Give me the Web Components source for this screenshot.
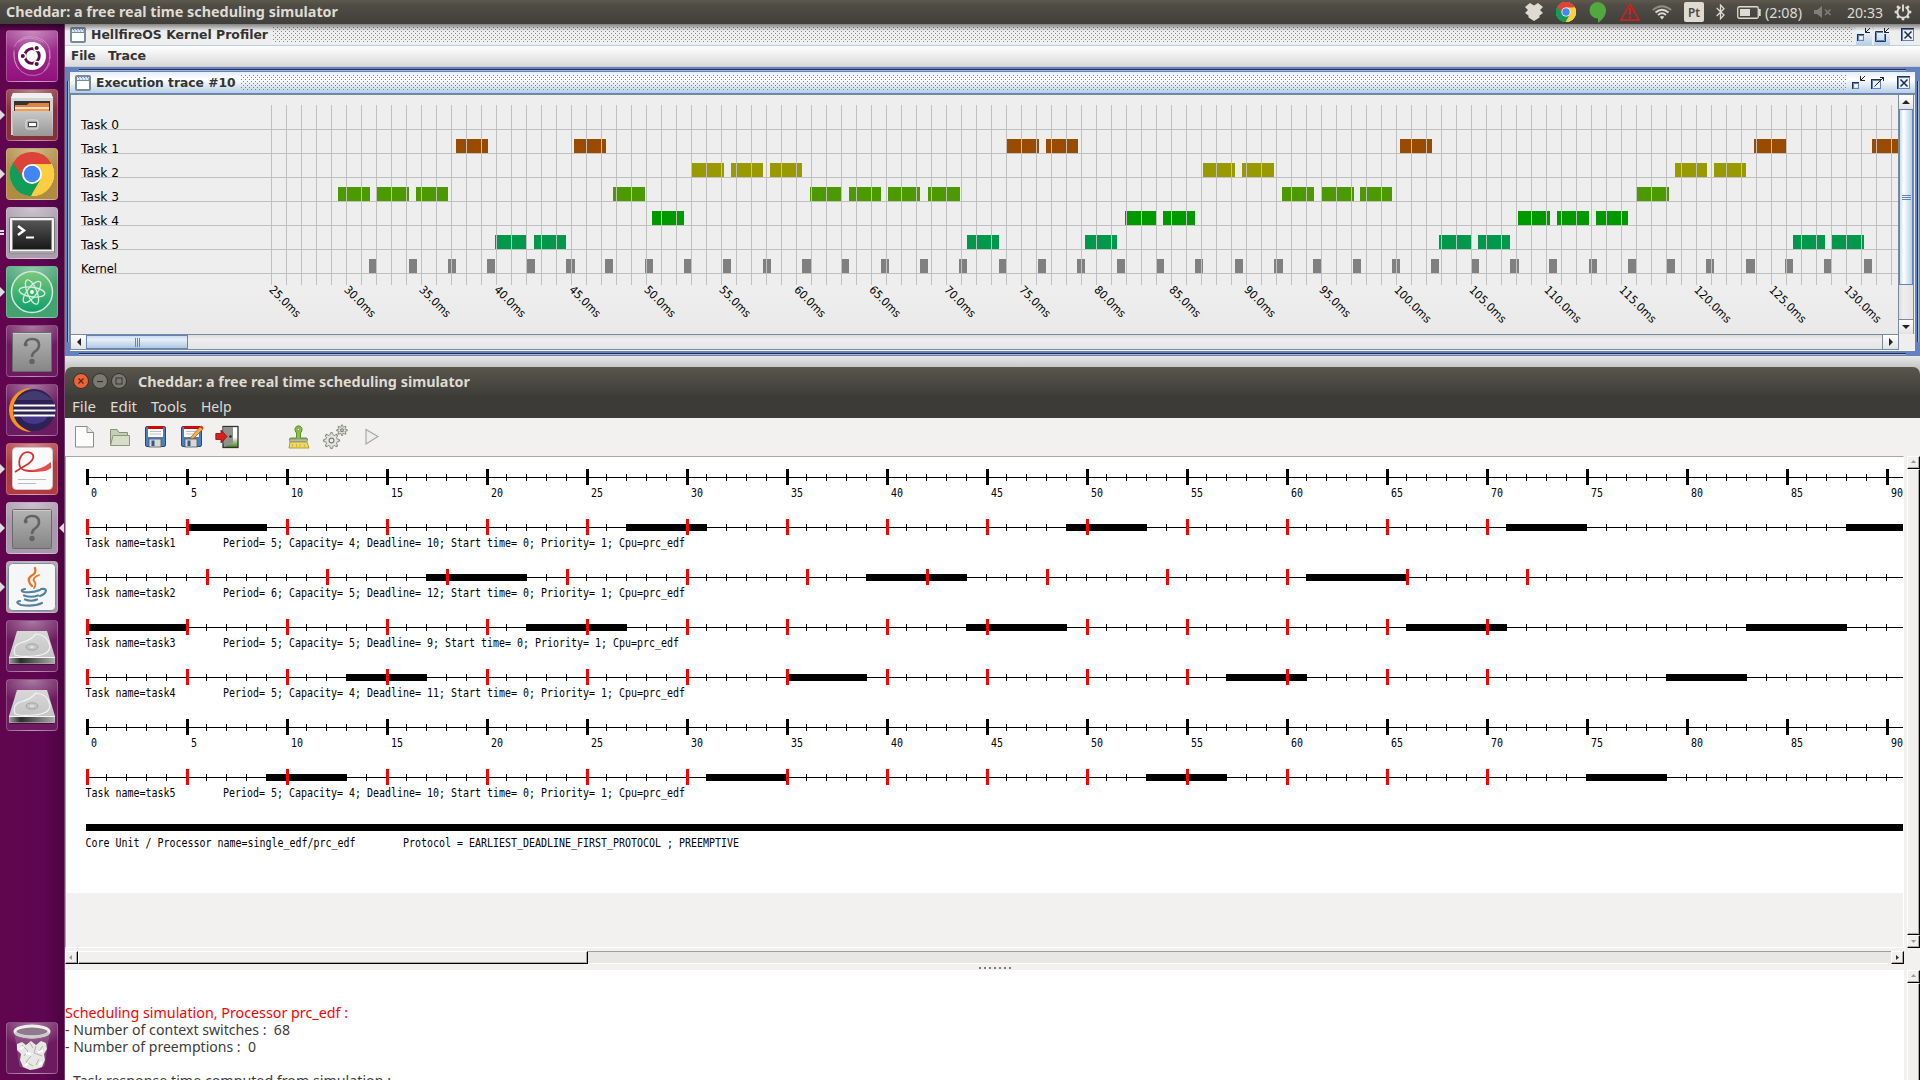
<!DOCTYPE html>
<html lang="en">
<head>
<meta charset="utf-8">
<title>Cheddar: a free real time scheduling simulator</title>
<style>
html,body{margin:0;padding:0;width:1920px;height:1080px;overflow:hidden;background:#5c0550}
</style>
</head>
<body>
<ubuntu-desktop></ubuntu-desktop>
<script>
const define = (name, render) => customElements.define(name, class extends HTMLElement {
  connectedCallback() {
    if (this.shadowRoot) return;
    this.attachShadow({mode: 'open'}).innerHTML = render(this);
  }
});
const range = (a, b, s = 1) => { const r = []; for (let i = a; i <= b; i += s) r.push(i); return r; };

/* One line of text condensed or stretched to an exact advance width. */
define('fit-text', el => {
  const g = (n, d) => el.getAttribute(n) || d;
  const w = g('w', 100), h = g('h', 20), b = g('base', 15);
  return `<style>:host{display:block;flex:none;width:${w}px;height:${h}px}svg{display:block;overflow:visible}
  text{font-family:${g('font', '"Noto Sans","Open Sans",sans-serif')};font-size:${g('size', 15)}px;font-weight:${g('weight', 400)};white-space:pre}</style>
  <svg width="${w}" height="${h}"><text x="0" y="${b}" fill="${g('color', '#dfdbd2')}" textLength="${w}" lengthAdjust="spacingAndGlyphs">${el.getAttribute('text')}</text></svg>`;
});

const chrome = `<circle cx="24" cy="24" r="22" fill="#fff"/>
 <path d="M24 24L4.9 13A22 22 0 0 1 43.1 13Z" fill="#db4437"/><path d="M24 24L43.1 13A22 22 0 0 1 24 46Z" fill="#ffcd40"/><path d="M24 24L24 46A22 22 0 0 1 4.9 13Z" fill="#0f9d58"/>
 <path d="M24 14H43.6A22 22 0 0 0 4.9 13L15.3 29Z" fill="#db4437"/><path d="M24 14H43.6A22 22 0 0 1 22.8 46L32.7 29Z" fill="#ffcd40"/><path d="M15.3 29L4.9 13A22 22 0 0 0 22.8 46L32.7 29L24 34Z" fill="#0f9d58"/>
 <circle cx="24" cy="24" r="10" fill="#fff"/><circle cx="24" cy="24" r="8.2" fill="#4285f4"/>`;
const question = `<defs><linearGradient id="q" x2="0" y2="1"><stop stop-color="#b4b4b4"/><stop offset="1" stop-color="#868686"/></linearGradient></defs>
 <rect x="6.5" y="7.500" width="39" height="39" rx="1" fill="url(#q)" stroke="#6a6a6a"/><path d="M7 8.500H45" stroke="#ccc"/>
 <path d="M19 19.500Q20 14 26 14Q33 14 33 20Q33 24 29 26.500Q26 28.500 26 32" fill="none" stroke="#636363" stroke-width="2.600"/><circle cx="19.700" cy="19.500" r="2" fill="#636363"/><circle cx="26" cy="36.500" r="2.700" fill="#636363"/>`;
const disk = `<defs><linearGradient id="d" x2="0" y2="1"><stop stop-color="#d8d8d8"/><stop offset="1" stop-color="#c0c0c0"/></linearGradient><linearGradient id="e"><stop stop-color="#999"/><stop offset=".25" stop-color="#2c2c2c"/><stop offset="1" stop-color="#aaa"/></linearGradient></defs>
 <path d="M11 11H41L49 37V43Q49 44 48 44H4Q3 44 3 43V37Z" fill="url(#d)"/><path d="M3.500 38H48.500V43.500H3.500Z" fill="url(#e)"/><path d="M3 37.500H49" stroke="#f5f5f5"/>
 <path d="M9 35Q6 26 14 23Q24 21 30 14Q42 15 44 26Q44 35 28 36Q14 37 9 35" fill="none" stroke="#f3f3f3" stroke-width="1.200"/><ellipse cx="26" cy="27" rx="6" ry="3.200" fill="#c3c3c3" stroke="#a5a5a5"/><ellipse cx="26" cy="27" rx="2.500" ry="1.300" fill="#ddd"/>
 <path d="M4 44.500H48" stroke="#2c0326" opacity=".6"/>`;
const gearPath = (cx, cy, r, n, t, w) => range(0, n - 1).map(i => { const a = i * 2 * Math.PI / n; return `<path d="M${(cx + Math.cos(a) * r).toFixed(1)} ${(cy + Math.sin(a) * r).toFixed(1)}L${(cx + Math.cos(a) * (r + t)).toFixed(1)} ${(cy + Math.sin(a) * (r + t)).toFixed(1)}" stroke-width="${w}"/>`; }).join('');
const gear = (cx, cy, r, n, w) => `<g stroke="#888a85" stroke-linecap="round">${gearPath(cx, cy, r - .5, n, 1.8, w + 1.3)}</g><circle cx="${cx}" cy="${cy}" r="${r + .3}" fill="#e4e4e1" stroke="#888a85"/><g stroke="#e4e4e1" stroke-linecap="round">${gearPath(cx, cy, r - 1.2, n, 1.8, w)}</g><circle cx="${cx}" cy="${cy}" r="${r * .42}" fill="#f2f1f0" stroke="#7d7f7a" stroke-width="1.200"/>`;
const floppy = `<rect x="1.500" y="1.500" width="20" height="20" rx="1.500" fill="#4d7fc0" stroke="#204a87"/><rect x="4" y="1" width="15" height="11" fill="#fff"/><rect x="4" y="1" width="15" height="3" fill="#d00a0a"/><path d="M6 6.500H17M6 9H17" stroke="#bbb"/><rect x="5" y="14" width="12" height="8" fill="#d6d9d5" stroke="#55585a" stroke-width=".8"/><rect x="7.500" y="15.500" width="3" height="5.500" fill="#3a5687"/>`;
/* name: [width, height, viewBox, markup] */
const ICONS = {
 ubuntu: [52,52,'0 0 52 52',`<path d="M8 17Q14 4 30 7Q46 11 44 29M44 33Q38 48 22 45Q7 40 8 22M12 12Q23 4 37 12M13 39Q7 32 8 20M43 20Q46 32 38 41" fill="none" stroke="#e2a3d2" stroke-width="1" opacity=".6"/><circle cx="26" cy="26" r="14" fill="#fff"/><circle cx="26" cy="26" r="7.300" fill="none" stroke="#5b0d4c" stroke-width="2.800"/><g stroke="#fff" stroke-width="1.300" fill="#5b0d4c"><circle cx="16.800" cy="26" r="2.700"/><circle cx="30.700" cy="18" r="2.700"/><circle cx="30.700" cy="34" r="2.700"/></g>`],
 files: [52,52,'0 0 52 52',`<defs><linearGradient id="a" x2="0" y2="1"><stop stop-color="#c9c9c9"/><stop offset="1" stop-color="#989898"/></linearGradient></defs><path d="M7 4H45L47 9V46H5V9Z" fill="#d4d4d4"/><path d="M7 4H45L47 9H5Z" fill="#f0f0f0"/><rect x="8" y="12" width="36" height="11" fill="#333"/><path d="M9 16H21L23 14H43V24H9Z" fill="#e08243"/><path d="M9 18H43V20H9Z" fill="#fae0c0"/><rect x="9" y="20" width="34" height="3" fill="#f39b48"/><path d="M6 22H46L47 47H7Z" fill="url(#a)"/><rect x="20" y="31" width="12" height="9" rx="2" fill="#aaa" stroke="#e1e1e1"/><rect x="22.500" y="33.500" width="8" height="4" fill="#fff" stroke="#4a4a4a"/>`],
 chrome: [52,52,'-2 -2 52 52',chrome],
 chromesmall: [20,20,'2 2 44 44',chrome],
 terminal: [52,52,'0 0 52 52',`<defs><linearGradient id="t" x2="0" y2="1"><stop stop-color="#555"/><stop offset="1" stop-color="#181818"/></linearGradient></defs><rect x="3.500" y="10.500" width="45" height="36" rx="1.500" fill="#f4f4f4" stroke="#777"/><path d="M4 44H48V46.500H4Z" fill="#aaa"/><rect x="6.500" y="13.500" width="39" height="29" fill="url(#t)" stroke="#888"/><path d="M12 19L18 23.500L12 28" fill="none" stroke="#fff" stroke-width="2.500"/><path d="M20 30.500H28" stroke="#fff" stroke-width="2"/>`],
 atom: [52,52,'0 0 52 52',`<defs><linearGradient id="m" x2="0" y2="1"><stop stop-color="#7cc87a"/><stop offset="1" stop-color="#0aa06c"/></linearGradient></defs><circle cx="26" cy="26" r="20.500" fill="url(#m)" stroke="#d5e7dd" stroke-width="1.500"/><g fill="none" stroke="#d2efdf" stroke-width="1.300"><ellipse cx="26" cy="26" rx="13" ry="4.800" transform="rotate(8 26 26)"/><ellipse cx="26" cy="26" rx="13" ry="4.800" transform="rotate(68 26 26)"/><ellipse cx="26" cy="26" rx="13" ry="4.800" transform="rotate(128 26 26)"/></g><circle cx="26" cy="26" r="1.900" fill="#e8fff2"/>`],
 question: [52,52,'0 0 52 52',question],
 eclipse: [52,52,'0 0 52 52',`<path d="M25 4A22 22 0 0 0 25 48Q9 40 9 26Q9 12 25 4" fill="#f7941e"/><circle cx="28" cy="26" r="21" fill="#2c2255"/><path d="M10 16Q28 -2 46 16Z" fill="#534b82" opacity=".6"/><path d="M14 32H42Q38 40 28 40Q18 40 14 32" fill="#473788"/><path d="M8 21.500H49M7.500 26.500H49.500M8 31.500H49" stroke="#fff" stroke-width="2.200"/>`],
 evince: [52,52,'0 0 52 52',`<rect x="6.500" y="4.500" width="40" height="42" rx="4" fill="#fafafa" stroke="#ccc"/><path d="M9 29Q15 25 22 21Q31 14 25 10Q18 7 14 15Q11 26 20 27.500Q32 30 45 23" fill="none" stroke="#d53434" stroke-width="1.800"/><path d="M24 27Q35 27 45 19V25Q38 31 24 27" fill="#e0504c"/><path d="M12 36.500H40M12 40.500H30" stroke="#bbb"/>`],
 java: [52,52,'0 0 52 52',`<rect x="2.500" y="2.500" width="47" height="47" rx="4" fill="#f6f6f6" stroke="#7393a9"/><g fill="none" stroke="#ea7425" stroke-linecap="round" stroke-width="2.300"><path d="M29 7Q31 12 25 15Q20 19 26 25"/><path d="M33 14Q26 17 28 20Q31 23 28 27" stroke-width="1.800"/></g><g fill="none" stroke="#5382a1" stroke-width="2.200" stroke-linecap="round"><path d="M19 28Q13 29 18 31Q27 32 34 29M18 34.500Q25 37 32 34.500M19 38.500Q25 41 31 38.500M35 28Q42 27 39 32Q37 34 34 35M14 40Q8 41 15 44Q28 46 36 42"/></g>`],
 disk: [52,52,'0 0 52 52',disk],
 trash: [52,52,'0 0 52 52',`<path d="M9 11L14 44Q26 50 38 44L43 11Z" fill="#b9a3b8" opacity=".25" stroke="#c9b5c7"/><ellipse cx="26" cy="9.500" rx="17" ry="5.500" fill="#8e7a8c" stroke="#efefec" stroke-width="3"/><path d="M9 11Q26 20 43 11" fill="none" stroke="#c9c9c4" stroke-width="2"/><path d="M11 22L16 20L20 23L25 19L30 23L35 19L40 21L41 27L38 32L39 38L36 45L30 47L24 48L17 45L14 38L15 32L11 28Z" fill="#e7e7e4"/><path d="M16 23L22 29L18 34M30 24L28 31L36 34M25 34L20 40L27 44M33 37L30 43M24 21L27 26M37 24L33 29" fill="none" stroke="#b5b5b0" stroke-width="1"/><path d="M14 27L18 25M20 31L25 32M32 30L37 29M19 44L22 41M33 43L36 40" stroke="#fff" stroke-width="1.800"/>`],
 dropbox: [18,18,'0 0 18 18',`<path d="M5 0L9 2.500L13 0L18 4L15 7L18 10L14.500 12.500V14.500L9 18L3.500 14.500V12.500L0 10L3 7L0 4Z" fill="#dfdbd2"/>`],
 hangouts: [17,21,'0 0 17 21',`<path d="M8.500 0A8.300 8.300 0 0 1 17 8.500Q17 15 9 21V16.500A8.200 8.200 0 0 1 8.500 0" fill="#51a83f"/>`],
 warning: [20,18,'0 0 20 18',`<path d="M10 1.200L19 17H1Z" fill="none" stroke="#e21b1b" stroke-width="1.500"/><path d="M10 5V12M10 13.500V15.500" stroke="#e21b1b" stroke-width="2"/>`],
 wifi: [20,15,'0 0 20 15',`<g fill="none" stroke="#dfdbd2" stroke-width="1.800"><path d="M.8 5Q10 -2.500 19.200 5" opacity=".45"/><path d="M3.500 7.500Q10 2 16.500 7.500"/><path d="M6 10Q10 6.500 14 10"/></g><path d="M7.700 11.800Q10 10 12.300 11.800L10 14.500Z" fill="#dfdbd2"/>`],
 bluetooth: [9,16,'0 0 9 16',`<path d="M.7 4L8 11L4.500 14.700V1L8 4.700L.7 12" fill="none" stroke="#dfdbd2" stroke-width="1.300"/>`],
 battery: [24,13,'0 0 24 13',`<rect x=".75" y=".75" width="20.500" height="11.500" rx="1.500" fill="none" stroke="#dfdbd2" stroke-width="1.300"/><rect x="3" y="3" width="10" height="7" fill="#dfdbd2"/><path d="M22.800 3V10" stroke="#dfdbd2" stroke-width="1.800"/>`],
 mute: [18,12,'0 0 18 12',`<path d="M0 4H3L8 0V12L3 8H0Z" fill="#807e77"/><path d="M11 3.500L16.500 9M16.500 3.500L11 9" stroke="#807e77" stroke-width="1.500"/>`],
 session: [18,18,'0 0 18 18',`<g stroke="#dfdbd2">${range(0,7).filter(i=>i!==6).map(i=>{const a=i*Math.PI/4;return `<path d="M${9+Math.cos(a)*5.5} ${9+Math.sin(a)*5.5}L${9+Math.cos(a)*8.3} ${9+Math.sin(a)*8.3}" stroke-width="2.600"/>`}).join('')}<path d="M6.500 4.200A5.600 5.600 0 1 0 11.500 4.200M9 1.500V8.500" fill="none" stroke-width="1.900"/></g>`],
 winicon: [16,16,'0 0 16 16',`<rect x="1" y="1" width="14" height="14" rx="1" fill="#fff" stroke="#7a8a99" stroke-width="2"/><rect x="2" y="2" width="12" height="3" fill="#dfe8f2"/><path d="M2 5.500H14" stroke="#7a8a99"/><path d="M3 2.500H14M4 4H14" stroke="#6382bf" stroke-dasharray="1 2"/>`],
 jmin: [16,16,'0 0 16 16',`<g fill="none"><rect x="1.500" y="7.500" width="6" height="6" stroke="#26304a"/><rect x="2.500" y="8.500" width="5" height="5" stroke="#6382bf"/></g><rect x="4" y="10" width="2" height="2" fill="#fff"/><path d="M9.500 1V5.500H14M9.500 5.500L14 1" fill="none" stroke="#222"/>`],
 jres: [16,16,'0 0 16 16',`<path d="M9 4.500H1.500V14.500H11.500V7" fill="none" stroke="#26304a"/><path d="M9 5.500H2.500V13.500H10.500V7" fill="none" stroke="#6382bf"/><path d="M10.500 1V5.500H15M10.500 5.500L15 1" fill="none" stroke="#222"/>`],
 jmax: [16,16,'0 0 16 16',`<rect x="1.500" y="4.500" width="9" height="9" fill="#eef4fa" stroke="#26304a"/><rect x="2.500" y="5.500" width="8" height="8" fill="none" stroke="#6382bf"/><path d="M4.500 11.500L13.500 2.500M10 2.500H13.500V6" fill="none" stroke="#222"/>`],
 jclose: [16,16,'0 0 16 16',`<rect x="1.500" y="1.500" width="12" height="12" fill="#e8f0f8" stroke="#26304a"/><rect x="2.500" y="2.500" width="11" height="11" fill="none" stroke="#6382bf"/><path d="M4.500 4.500L11.500 11.500M11.500 4.500L4.500 11.500" stroke="#222b42" stroke-width="1.500"/>`],
 new: [22,24,'0 0 22 24',`<path d="M2.500 1.500H14L20.500 7.500V22H2.500Z" fill="#fcfcfb" stroke="#8b8d88"/><path d="M14 1.500V7.500H20.500" fill="#e6e6e3" stroke="#8b8d88"/>`],
 open: [22,24,'0 0 22 24',`<path d="M1.500 20V4.500H8L10 7.500H18.500V11" fill="#c5ceb6" stroke="#888f7b"/><path d="M1.500 20.500L4 10.500H20.500V20.500Z" fill="#d6ddc8" stroke="#8d957f"/>`],
 save: [24,24,'0 0 24 24',floppy],
 saveas: [24,24,'0 0 24 24',floppy+`<path d="M11 12L20 2L23 4L14 13L10.500 14Z" fill="#f2b14b" stroke="#a4641c" stroke-width=".8"/><path d="M20 2L21.500 .5L23.500 2.500L23 4Z" fill="#d33"/>`],
 exit: [24,24,'0 0 24 24',`<defs><linearGradient id="x" x2="0" y2="1"><stop offset=".5" stop-color="#fff"/><stop offset="1" stop-color="#3a8011"/></linearGradient></defs><rect x="8" y="1.500" width="15" height="21" fill="url(#x)" stroke="#2e3436" stroke-width="1.300"/><path d="M8.500 2H18V18L9 22Z" fill="#8e918c"/><circle cx="15.500" cy="11.500" r="1.200" fill="#222"/><path d="M.8 8.500H6V5L12 11.500L6 18V14.500H.8Z" fill="#d82020" stroke="#8e0b0b" stroke-width=".8"/>`],
 brush: [24,24,'0 0 24 24',`<path d="M9.500 13V8Q7.500 6 8 3.500Q9 .8 11.500 .8Q14 .8 15 3.500Q15.500 6 13.500 8V13H19Q20.500 13 20.500 15H2.500Q2.500 13 4 13Z" fill="#8cc04b" stroke="#4e8a18" stroke-width=".9"/><circle cx="11.500" cy="4.500" r="1.200" fill="#fff" stroke="#4e8a18" stroke-width=".7"/><rect x="2.500" y="14" width="18" height="2.500" fill="#b7b7b2" stroke="#777" stroke-width=".5"/><path d="M3 17H20L22 23H2Z" fill="#eedb67" stroke="#a58b1c" stroke-width=".8"/><path d="M6 19L5 22M9.500 19V22M13 19V22M17 19L18 22" stroke="#c2aa3c" stroke-width=".8"/>`],
 gears: [26,26,'0 0 26 26',gear(9.5,16.5,5.6,8,2)+gear(20,6.2,3.2,8,1.1)],
 play: [16,18,'0 0 16 18',`<path d="M2 1.500L14 8.500L2 16Z" fill="#eeeeec" stroke="#a3a5a0" stroke-width="1.100"/>`]
};
define('app-icon', el => { const [w,h,v,m] = ICONS[el.getAttribute('name')];
  return `<style>:host{display:block;flex:none}svg{display:block}</style><svg width="${w}" height="${h}" viewBox="${v}">${m}</svg>`; });

define('launcher-tile', el => `<style>:host{display:flex;flex:none;position:relative;width:50px;height:50px;margin-left:6px;border-radius:4px;border:1px solid rgba(255,255,255,.22);
 background:radial-gradient(ellipse 36px 24px at 50% 0,rgba(255,255,255,.42),rgba(255,255,255,0)),${el.getAttribute('bg') || '#6d1b60'}}
 app-icon{margin:-1px}
 i{position:absolute;left:-7px;top:20px;border:5px solid transparent;border-left-color:#ddd;border-right:0}
 i.two{border:0;width:4px;height:2px;background:#ddd;top:22px;box-shadow:0 3px #ddd}
 i.r{left:auto;right:-7px;border:5px solid transparent;border-right-color:#ddd;border-left:0}</style>
 <app-icon name="${el.getAttribute('icon')}"></app-icon>${{one:'<i></i>',two:'<i class="two"></i>',both:'<i></i><i class="r"></i>'}[el.getAttribute('mark')] || ''}`);

define('unity-launcher', () => `<style>:host{display:flex;flex-direction:column;gap:7px;box-sizing:border-box;width:65px;padding:6px 0;background:linear-gradient(90deg,#62054f,#5d0651 70%,#4c0441);border-right:1px solid #76436d}
 .end{margin-top:auto}</style>
 <launcher-tile icon="ubuntu" bg="linear-gradient(#a13c91,#93107c)"></launcher-tile>
 <launcher-tile icon="files" bg="#86303d" mark="one"></launcher-tile>
 <launcher-tile icon="chrome" bg="#b08b42" mark="one"></launcher-tile>
 <launcher-tile icon="terminal" bg="#aa9cac" mark="two"></launcher-tile>
 <launcher-tile icon="atom" bg="#42a270" mark="one"></launcher-tile>
 <launcher-tile icon="question"></launcher-tile>
 <launcher-tile icon="eclipse"></launcher-tile>
 <launcher-tile icon="evince" bg="#b23b3f" mark="one"></launcher-tile>
 <launcher-tile icon="question" bg="#a898ab" mark="both"></launcher-tile>
 <launcher-tile icon="java" bg="#a8969f" mark="one"></launcher-tile>
 <launcher-tile icon="disk"></launcher-tile>
 <launcher-tile icon="disk"></launcher-tile>
 <launcher-tile icon="trash" class="end"></launcher-tile>`);

define('top-panel', () => `<style>:host{display:flex;align-items:center;box-sizing:border-box;height:24px;padding-left:6px;background:linear-gradient(#5d5a4c,#504d46 20%,#403f3a);position:relative}
 :host::after{content:"";position:absolute;left:0;right:0;top:24px;height:7px;background:linear-gradient(rgba(0,0,0,.45),transparent);z-index:5}
 .sp{flex:1}.tray{display:flex;align-items:center}.pt{width:20px;height:20px;background:#dfdbd2;border-radius:2px;display:flex;justify-content:center}
 .tray>*{margin-left:var(--g,0)}</style>
 <fit-text text="Cheddar: a free real time scheduling simulator" w="332" size="14.5" weight="700" h="24" base="17"></fit-text><span class="sp"></span>
 <div class="tray"><app-icon name="dropbox"></app-icon><app-icon name="chromesmall" style="--g:13px"></app-icon><app-icon name="hangouts" style="--g:13px"></app-icon><app-icon name="warning" style="--g:14px"></app-icon><app-icon name="wifi" style="--g:12px"></app-icon>
 <div class="pt" style="--g:12px"><fit-text text="Pt" w="12" size="13" weight="600" h="20" base="15" color="#4a4841"></fit-text></div>
 <app-icon name="bluetooth" style="--g:12px"></app-icon><app-icon name="battery" style="--g:12px"></app-icon><fit-text text="(2:08)" w="37" size="14.5" h="24" base="17.5" style="--g:4px"></fit-text><app-icon name="mute" style="--g:12px"></app-icon><fit-text text="20:33" w="36" size="14.5" h="24" base="17.5" style="--g:15px"></fit-text><app-icon name="session" style="--g:11px;margin-right:8px"></app-icon></div>`);

const JF = `font='"DejaVu Sans",sans-serif' size="12.500" weight="700" color="#333"`;
define('java-titlebar', el => { const on = el.hasAttribute('active'), c = on ? '#6382bf' : '#7a8a99';
  const dot = `conic-gradient(from 270deg at 1px 1px,${c} 90deg,transparent 0)`;
  return `<style>:host{display:flex;box-sizing:border-box;height:22px;padding:${on ? '3px 3px 0 5px' : '3px 4px 0 5px'};background:${on ? 'linear-gradient(#e4eef8,#fff 35%,#b8cfe5)' : '#eee'};border-bottom:1px solid ${on ? '#6382bf' : '#b8cfe5'}}
  .bumps{flex:1;min-width:0;height:16px;margin:0 4px 0 5px;background:${dot} 0 0/4px 4px,${dot} 2px 2px/4px 4px}
  fit-text{margin-left:5px}.b{display:flex;flex:none}${on ? '' : '.b .x{background:linear-gradient(#fff,#b8cfe5);}'}</style>
  <app-icon name="winicon"></app-icon><fit-text text="${el.getAttribute('text')}" w="${el.getAttribute('w')}" ${JF} h="16" base="12"></fit-text>
  <div class="bumps"></div>
  <div class="b"><app-icon class="x" name="jmin"></app-icon><span style="width:${on ? 3 : 2}px"></span><app-icon class="x" name="${on ? 'jmax' : 'jres'}"></app-icon><span style="width:10px"></span><app-icon name="jclose"></app-icon></div>`; });

/* Start column of each executed slot, grouped by task row */
const TRACE = {
 1:['#994c00',[456,574,1007,1046,1400,1754,1872]],
 2:['#999900',[692,731,770,1203,1242,1675,1714]],
 3:['#4c9900',[338,377,416,613,810,849,888,928,1282,1322,1360,1637]],
 4:['#009900',[652,1125,1163,1518,1557,1596]],
 5:['#00994c',[495,534,967,1085,1439,1478,1793,1832]]};
const KERNEL = [[369,376],[409,417],[448,456],[487,495],[527,535],[566,575],[605,613],[645,653],[684,691],[723,731],[763,771],[802,811],[842,849],[881,889],[920,928],[959,967],[999,1006],[1038,1046],[1077,1085],[1117,1125],[1157,1164],[1195,1203],[1235,1243],[1274,1283],[1313,1321],[1353,1361],[1392,1400],[1431,1439],[1472,1479],[1510,1519],[1549,1557],[1589,1597],[1628,1636],[1667,1675],[1706,1714],[1746,1755],[1785,1793],[1824,1831],[1864,1872]];
define('trace-chart', () => { let s = '';
  for (const k in TRACE) for (const x of TRACE[k][1]) s += `<rect x="${x}" y="${115 + 24 * k}" width="32" height="14" fill="${TRACE[k][0]}"/>`;
  for (const [a, b] of KERNEL) s += `<rect x="${a}" y="259" width="${b - a}" height="14" fill="#808080"/>`;
  for (const x of range(271, 1897, 15)) s += `<rect x="${x}" y="105" width="1" height="180" fill="#c0c0c0"/>`;
  ['Task 0','Task 1','Task 2','Task 3','Task 4','Task 5','Kernel'].forEach((t, i) => { s += `<rect x="81" y="${129 + 24 * i}" width="1817" height="1" fill="#c0c0c0"/><text x="81" y="${129 + 24 * i}" textLength="${i < 6 ? 38 : 36}" lengthAdjust="spacingAndGlyphs">${t}</text>`; });
  for (const v of range(25, 130, 5)) { const x = 271 + (v - 25) * 15; s += `<text transform="translate(${x - 2.5} 290.500) rotate(45)" textLength="${v < 100 ? 39 : 47}" lengthAdjust="spacingAndGlyphs">${v}.0ms</text>`; }
  return `<style>:host{display:block;background:linear-gradient(#eee 80%,#e9e9e9)}svg{display:block}text{font:11.500px "DejaVu Sans",sans-serif;fill:#000}</style><svg width="1827" height="239" viewBox="71 95 1827 239" shape-rendering="crispEdges">${s}</svg>`; });

define('metal-scrollbar', el => { const v = el.getAttribute('dir') === 'v';
  return `<style>:host{display:flex;box-sizing:border-box;flex-direction:${v ? 'column' : 'row'};${v ? 'width:16px;height:239px;border-left:1px solid #7a8a99;border-right:1px solid #7a8a99' : 'width:1828px;height:16px;border-top:1px solid #7a8a99;border-bottom:1px solid #7a8a99;border-right:1px solid #7a8a99'};background:linear-gradient(${v ? '90deg' : '180deg'},#dcdcdc,#eee 30%,#e4e4e4)}
  .a{flex:none;width:${v ? 14 : 15}px;height:14px;display:flex;align-items:center;justify-content:center;background:linear-gradient(#fff,#e2e2e2)}
  .t{box-sizing:border-box;flex:none;${v ? 'height:176px;background:linear-gradient(90deg,#c8ddf2,#fff 30%,#b8cfe5)' : 'width:102px;background:linear-gradient(#c8ddf2,#e6eff8 30%,#b0c8e0)'};border:1px solid #6382bf;display:flex;flex-direction:${v ? 'column' : 'row'};gap:1px;align-items:center;justify-content:center}
  .t i{${v ? 'width:9px;height:1px' : 'width:1px;height:9px'};background:#6382bf}.s{flex:1}
  svg{display:block}.l{border-${v ? 'top' : 'left'}:1px solid #7a8a99}</style>
  <div class="a"><svg width="8" height="8"><path d="${v ? 'M0 6H8L4 2Z' : 'M6 0V8L2 4Z'}" fill="#222"/></svg></div><div class="t"><i></i><i></i><i></i></div><div class="s"></div><div class="a l"><svg width="8" height="8"><path d="${v ? 'M0 2H8L4 6Z' : 'M2 0V8L6 4Z'}" fill="#222"/></svg></div>`; });

define('java-profiler', () => `<style>:host{display:flex;flex-direction:column;height:343px;background:#eee}
 .menu{display:flex;gap:12.500px;box-sizing:border-box;height:21px;padding-left:6px;background:linear-gradient(#fff,#dadada);border-bottom:1px solid #ccc}
 .frame{box-sizing:border-box;height:289px;border:5px solid #6382bf;display:flex;flex-direction:column;position:relative}
 .row{display:flex;border-left:1px solid #7a8a99}.row.c{border-top:1px solid #7a8a99}.e{position:absolute;background:#26304a}
 .foot{height:11px;background:linear-gradient(#e9e9e9,#c8c8c8)}.w{height:1px;background:#f8f8f8}</style>
 <java-titlebar text="HellfireOS Kernel Profiler" w="177"></java-titlebar>
 <div class="menu"><fit-text text="File" w="24.500" ${JF} h="20" base="14"></fit-text><fit-text text="Trace" w="38" ${JF} h="20" base="14"></fit-text></div>
 <div class="frame"><div class="e" style="left:9px;right:9px;top:-3px;height:1px;box-shadow:0 1px #a3b8cc"></div><div class="e" style="left:9px;right:9px;bottom:-3px;height:1px;box-shadow:0 1px #a3b8cc"></div><div class="e" style="top:9px;bottom:9px;left:-3px;width:1px;box-shadow:1px 0 #a3b8cc"></div><div class="e" style="top:9px;bottom:9px;right:-3px;width:1px;box-shadow:1px 0 #a3b8cc"></div>
 <java-titlebar active text="Execution trace #10" w="139.500"></java-titlebar>
 <div class="row c"><trace-chart></trace-chart><metal-scrollbar dir="v"></metal-scrollbar></div>
 <div class="row"><metal-scrollbar dir="h"></metal-scrollbar></div><div class="w"></div></div>
 <div class="foot"></div>`);

/* Scheduling diagram: rows every 50px, 20px per time unit */
const MONO = (x, y, t) => `<text x="${x}" y="${y}" textLength="${t.length * 6}" lengthAdjust="spacingAndGlyphs">${t}</text>`;
const ROWS = [
 null,
 ['task1',5,4,10,[[5,9],[27,31],[49,53],[71,75],[88,92]]],
 ['task2',6,5,12,[[17,22],[39,44],[61,66]]],
 ['task3',5,5,9,[[0,5],[22,27],[44,49],[66,71],[83,88]]],
 ['task4',5,4,11,[[13,17],[35,39],[57,61],[79,83]]],
 null,
 ['task5',5,4,10,[[9,13],[31,35],[53,57],[75,79]]]];
define('schedule-chart', () => { let s = '';
  ROWS.forEach((r, i) => { const y = 477 + 50 * i;
    s += `<rect x="86" y="${y}" width="1817" height="1"/>` + range(0, 90).map(u => `<rect x="${86 + 20 * u}" y="${y - 3}" width="1" height="7"/>`).join('');
    if (!r) { for (const u of range(0, 90, 5)) s += `<rect x="${86 + 20 * u}" y="${y - 8}" width="3" height="16"/>` + MONO(91 + 20 * u, y + 20, String(u)); return; }
    for (const [a, b] of r[4]) s += `<rect x="${86 + 20 * a}" y="${y - 3}" width="${Math.min(20 * (b - a) + 1, 1817 - 20 * a)}" height="7"/>`;
    for (const u of range(0, 72, r[1])) s += `<rect x="${86 + 20 * u}" y="${y - 8}" width="3" height="16" fill="#f00"/>`;
    s += MONO(85.5, y + 20, 'Task name=' + r[0]) + MONO(223, y + 20, `Period= ${r[1]}; Capacity= ${r[2]}; Deadline= ${r[3]}; Start time= 0; Priority= 1; Cpu=prc_edf`);
  });
  s += `<rect x="86" y="824" width="1817" height="7"/>` + MONO(85.5, 847, 'Core Unit / Processor name=single_edf/prc_edf') + MONO(403, 847, 'Protocol = EARLIEST_DEADLINE_FIRST_PROTOCOL ; PREEMPTIVE');
  return `<style>:host{display:block;height:436px;background:#fff}svg{display:block;overflow:visible}text{font:12px "DejaVu Sans Mono",monospace;fill:#000}</style><svg width="1837" height="436" viewBox="66 457 1837 436" shape-rendering="crispEdges">${s}</svg>`; });

define('classic-scrollbar', el => { const v = el.getAttribute('dir') === 'v', t = el.getAttribute('thumb');
  const up = v ? 'M4 7H9L6.500 4Z' : 'M7 4V9L4 6.500Z', dn = v ? 'M4 5H9L6.500 8Z' : 'M5 4V9L8 6.500Z';
  return `<style>:host{display:flex;flex:none;overflow:hidden;flex-direction:${v ? 'column' : 'row'};${v ? 'width:13px' : 'height:13px'};background:#e8e7e5;box-shadow:inset 0 1px #a09e9a,inset 0 -1px #fff}
  div{box-sizing:border-box;flex:none;background:#f1f0ee;border:1px solid;border-color:#fff #000 #000 #fff;box-shadow:inset -1px -1px #aaa8a4}.a{width:13px;height:13px}.t{${v ? 'height' : 'width'}:${t}px}svg{display:block;margin:-1px}.g{flex:1}</style>
  <div class="a"><svg width="13" height="13"><path d="${up}" fill="#999"/></svg></div><div class="t"></div><span class="g"></span><div class="a"><svg width="13" height="13"><path d="${dn}" fill="${v ? '#999' : '#333'}"/></svg></div>`; });

define('cheddar-window', () => `<style>:host{display:flex;flex-direction:column;height:713px;background:#f2f1f0;overflow:hidden}
 .back{background:#c8c8c8}.title{display:flex;box-sizing:border-box;height:28px;padding:0 0 0 8px;align-items:center;background:linear-gradient(#5b584d,#55524a 15%,#3f3e39);border-radius:7px 7px 0 0}
 .wb{flex:none;box-sizing:border-box;width:16px;height:16px;border-radius:50%;margin-right:3px;border:1px solid #33322e;background:#7a786f}.wb.c{background:#ee6238}.wb svg{display:block}
 .menu{display:flex;height:23px;padding-left:7px;background:#3c3b37}
 .tools{display:flex;align-items:center;box-sizing:border-box;height:38px;background:#f2f1ef}
 .main{display:flex;justify-content:space-between;height:492px}.cv{box-sizing:border-box;width:1839px;border:1px solid;border-color:#aca8a0 #fff #fff #aca8a0}
 .hs{display:flex;flex-direction:column;margin-top:3px;width:1839px}
 .split{height:5px;padding:1px 0 0 5px;display:flex;align-items:center;justify-content:center;gap:3px}.split i{width:2px;height:2px;background:#555;border-radius:1px}
 .bot{display:flex;height:110px;justify-content:space-between}.txt{width:1839px;background:#fff;box-sizing:border-box;padding-top:35px;overflow:hidden}</style>
 <div class="back"><div class="title"><span class="wb c"><svg width="14" height="14"><path d="M4.500 4.500L9.500 9.500M9.500 4.500L4.500 9.500" stroke="#5c2412" stroke-width="1.200"/></svg></span><span class="wb"><svg width="14" height="14"><path d="M4 7.500H10" stroke="#33322e" stroke-width="1.200"/></svg></span><span class="wb"><svg width="14" height="14"><rect x="4" y="4" width="6" height="6" fill="none" stroke="#33322e"/></svg></span>
 <fit-text text="Cheddar: a free real time scheduling simulator" w="332" size="14.500" weight="700" h="28" base="19.500" style="margin-left:8px"></fit-text></div></div>
 <div class="menu"><fit-text text="File" w="24" size="14.500" h="23" base="17"></fit-text><fit-text text="Edit" w="27" size="14.500" h="23" base="17" style="margin-left:14px"></fit-text><fit-text text="Tools" w="35.500" size="14.500" h="23" base="17" style="margin-left:14px"></fit-text><fit-text text="Help" w="30.500" size="14.500" h="23" base="17" style="margin-left:14.500px"></fit-text></div>
 <div class="tools"><app-icon name="new" style="margin-left:8px"></app-icon><app-icon name="open" style="margin-left:14px"></app-icon><app-icon name="save" style="margin-left:13px"></app-icon><app-icon name="saveas" style="margin-left:12px"></app-icon><app-icon name="exit" style="margin-left:11px"></app-icon><app-icon name="brush" style="margin-left:48px"></app-icon><app-icon name="gears" style="margin-left:11px"></app-icon><app-icon name="play" style="margin-left:16px"></app-icon></div>
 <div class="main"><div class="cv"><schedule-chart></schedule-chart></div><classic-scrollbar dir="v" thumb="466"></classic-scrollbar></div>
 <div class="hs"><classic-scrollbar dir="h" thumb="510"></classic-scrollbar></div>
 <div class="split">${'<i></i>'.repeat(7)}</div>
 <div class="bot"><div class="txt"><fit-text text="Scheduling simulation, Processor prc_edf :" w="283" size="14" h="17" base="13" color="#f00"></fit-text><fit-text text="- Number of context switches :  68" w="225" size="14" h="17" base="13" color="#3c3c3c"></fit-text><fit-text text="- Number of preemptions :  0" w="191" size="14" h="34" base="13" color="#3c3c3c"></fit-text><fit-text text="Task response time computed from simulation :" w="318" size="14" h="17" base="13" color="#3c3c3c" style="margin-left:7.500px"></fit-text></div><classic-scrollbar dir="v" thumb="200"></classic-scrollbar></div>`);

define('ubuntu-desktop', () => `<style>:host{display:flex;flex-direction:column;width:1920px;height:1080px;overflow:hidden}.d{display:flex;flex:1}.w{flex:1;display:flex;flex-direction:column;min-width:0}unity-launcher{flex:none}</style>
 <top-panel></top-panel><div class="d"><unity-launcher></unity-launcher><div class="w"><java-profiler></java-profiler><cheddar-window></cheddar-window></div></div>`);
</script>
</body>
</html>
